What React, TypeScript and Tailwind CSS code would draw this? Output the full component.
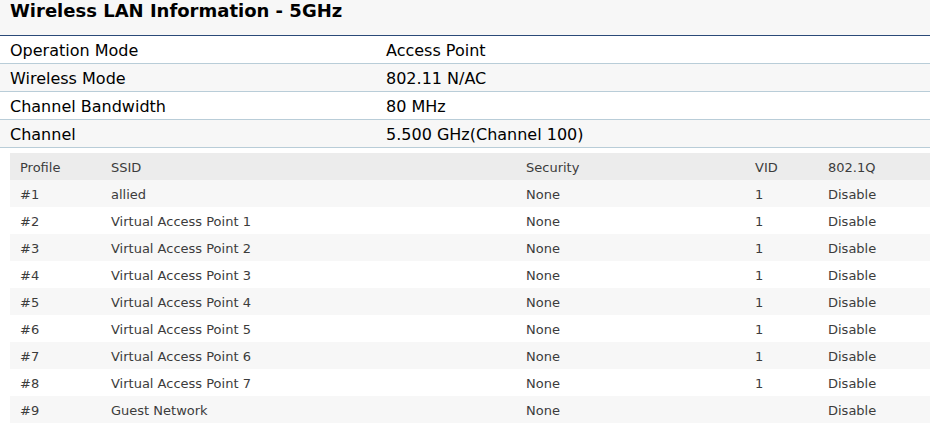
const info = [
  ['Operation Mode', 'Access Point'],
  ['Wireless Mode', '802.11 N/AC'],
  ['Channel Bandwidth', '80 MHz'],
  ['Channel', '5.500 GHz(Channel 100)'],
];

const profiles = [
  ['#1', 'allied', 'None', '1', 'Disable'],
  ['#2', 'Virtual Access Point 1', 'None', '1', 'Disable'],
  ['#3', 'Virtual Access Point 2', 'None', '1', 'Disable'],
  ['#4', 'Virtual Access Point 3', 'None', '1', 'Disable'],
  ['#5', 'Virtual Access Point 4', 'None', '1', 'Disable'],
  ['#6', 'Virtual Access Point 5', 'None', '1', 'Disable'],
  ['#7', 'Virtual Access Point 6', 'None', '1', 'Disable'],
  ['#8', 'Virtual Access Point 7', 'None', '1', 'Disable'],
  ['#9', 'Guest Network', 'None', '', 'Disable'],
];

export default function App() {
  return (
    <div className="w-[930px] h-[423px] overflow-hidden bg-white font-['DejaVu_Sans',Verdana,sans-serif]">
      <div className="h-[36px] bg-[#f7f7f7] border-b border-[#2b4a78] px-[10px]">
        <h1 className="text-[18px] font-bold text-black leading-[22px]">Wireless LAN Information - 5GHz</h1>
      </div>
      <div>
        {info.map(([label, value], i) => (
          <div
            key={label}
            className={`flex h-[28px] items-center pt-[3px] border-b border-[#b9cdd8] text-[16px] text-black ${i % 2 ? 'bg-[#f7f7f7]' : 'bg-white'}`}
          >
            <span className="w-[386px] pl-[10px]">{label}</span>
            <span>{value}</span>
          </div>
        ))}
      </div>
      <div className="ml-[10px] mt-[5px] text-[13px] text-[#3c3c3c]">
        <div className="flex h-[27px] items-center pt-[2px] bg-[#ececec]">
          <span className="w-[101px] pl-[10px]">Profile</span>
          <span className="w-[415px]">SSID</span>
          <span className="w-[229px]">Security</span>
          <span className="w-[73px]">VID</span>
          <span>802.1Q</span>
        </div>
        {profiles.map((p, i) => (
          <div key={p[0]} className={`flex h-[27px] items-center pt-[2px] ${i % 2 ? 'bg-white' : 'bg-[#f7f7f7]'}`}>
            <span className="w-[101px] pl-[10px]">{p[0]}</span>
            <span className="w-[415px]">{p[1]}</span>
            <span className="w-[229px]">{p[2]}</span>
            <span className="w-[73px]">{p[3]}</span>
            <span>{p[4]}</span>
          </div>
        ))}
      </div>
    </div>
  );
}
